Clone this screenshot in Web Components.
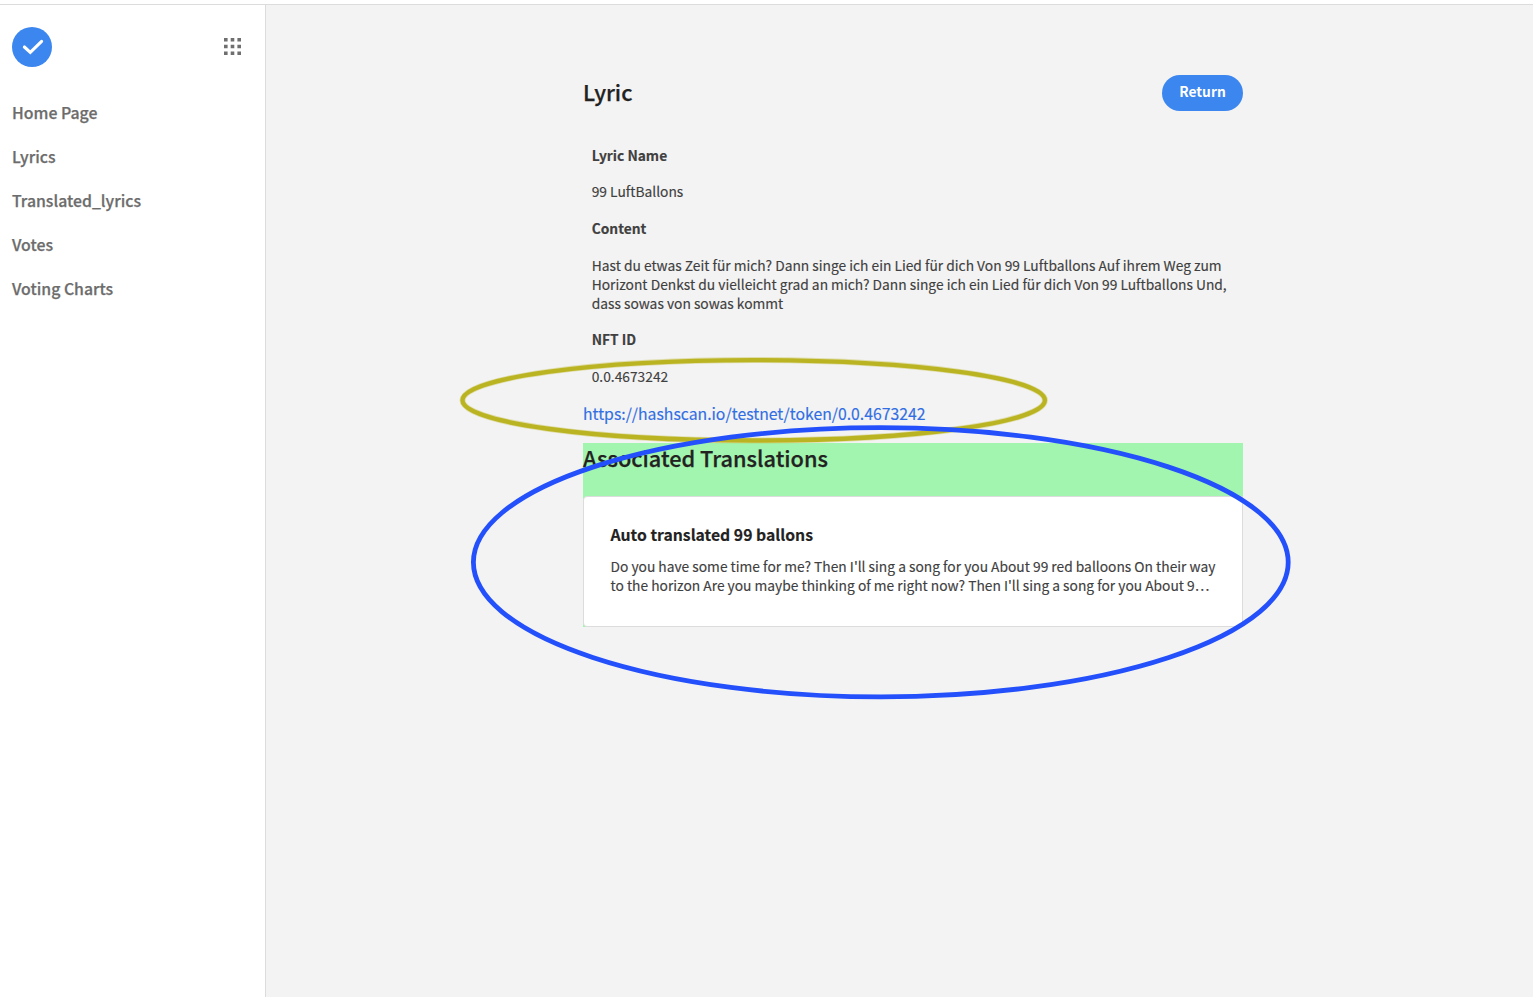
<!DOCTYPE html>
<html lang="en">
<head>
<meta charset="utf-8">
<title>Lyric</title>
<style>
html,body{margin:0;height:100%;overflow:hidden}
body{font-family:"Noto Sans CJK SC","Noto Sans",sans-serif;background:#fff}
</style>
</head>
<body>
<lyric-app></lyric-app>
<script>
const define = (name, html) => customElements.define(name, class extends HTMLElement {
  connectedCallback() {
    if (this.shadowRoot) return;
    const t = document.createElement('template');
    t.innerHTML = html;
    this.attachShadow({ mode: 'open' }).append(t.content.cloneNode(true));
  }
});

define('brand-bar', `
<style>
:host{display:flex;justify-content:space-between;align-items:center;height:40px;padding:0 24px 0 12px}
svg{display:block}
.grid{margin-top:-1px}
</style>
<svg width="40" height="40" viewBox="0 0 40 40"><circle cx="20" cy="20" r="20" fill="#3b86ef"/><path d="M12.4 20 18.3 25.3 29.6 14.4" fill="none" stroke="#fff" stroke-width="3.1" stroke-linecap="round" stroke-linejoin="miter"/></svg>
<svg class="grid" width="17" height="17" viewBox="0 0 17 17" fill="#6f6f6f"><path d="M0 0h3.6v3.6H0zM6.7 0h3.6v3.6H6.7zM13.4 0H17v3.6h-3.6zM0 6.7h3.6v3.6H0zM6.7 6.7h3.6v3.6H6.7zM13.4 6.7H17v3.6h-3.6zM0 13.4h3.6V17H0zM6.7 13.4h3.6V17H6.7zM13.4 13.4H17V17h-3.6z"/></svg>`);

define('nav-item', `
<style>
:host{display:block;height:44px;line-height:44px;padding-left:12px;font-size:15.84px;font-weight:500;color:#6c6c6c;-webkit-text-stroke:.25px #6c6c6c}
</style><slot></slot>`);

define('side-bar', `
<style>
:host{display:block;width:265px;flex:none;border-right:1px solid #dcdcdc;background:#fff;padding-top:22px}
nav{margin-top:24px}
</style>
<brand-bar></brand-bar>
<nav><nav-item>Home Page</nav-item><nav-item>Lyrics</nav-item><nav-item>Translated_lyrics</nav-item><nav-item>Votes</nav-item><nav-item>Voting Charts</nav-item></nav>`);

define('section-title', `
<style>
:host{display:block;font-size:21.76px;line-height:32px;font-weight:500;color:#222;-webkit-text-stroke:.25px #222}
</style><slot></slot>`);

define('pill-button', `
<style>
:host{display:block;box-sizing:border-box;width:81px;height:36px;border-radius:18px;background:#3b86ef;color:#fff;font-size:13.8px;font-weight:700;line-height:32px;text-align:center}
</style><slot></slot>`);

define('data-field', `
<style>
:host{display:block;padding-left:8.7px;font-size:13.79px;line-height:19px;color:#404040;-webkit-text-stroke:.15px #404040}
.label{font-weight:700;margin-bottom:17.4px}
</style><div class="label"><slot name="label"></slot></div><div><slot></slot></div>`);

define('translation-card', `
<style>
:host{display:block;box-sizing:border-box;height:131px;border:1px solid #dcdcdc;border-radius:4px 0 0 4px;background:#fff;padding:26px 26px 0 26.5px;font-size:13.79px;line-height:19px;color:#404040}
.title{font-size:15.77px;line-height:24px;font-weight:700;color:#222;margin-bottom:10px;-webkit-text-stroke:.15px #222}
.body{white-space:nowrap;-webkit-text-stroke:.15px #404040}
</style><div class="title"><slot name="title"></slot></div><div class="body"><slot></slot></div>`);

define('ring-marks', `
<style>
:host{position:absolute;inset:0;pointer-events:none}
svg{display:block}
</style>
<svg width="1533" height="997" fill="none">
<ellipse cx="753.7" cy="400.3" rx="291.2" ry="40.2" stroke="#bbb422" stroke-opacity=".35" stroke-width="6"/>
<ellipse cx="753.7" cy="400.3" rx="291.2" ry="40.2" stroke="#bbb422" stroke-width="4.4"/>
<ellipse cx="880.8" cy="562.3" rx="407.4" ry="134.6" stroke="#2350fb" stroke-width="4.8"/>
</svg>`);

define('lyric-page', `
<style>
:host{display:block;flex:1;background:#f3f3f3}
main{width:660px;margin-left:317px;padding-top:70px}
header{display:flex;justify-content:space-between;align-items:flex-start;height:71px}
header section-title{margin-top:1px}
.fields{display:grid;row-gap:17.8px}
a{display:block;margin-top:16.4px;font-size:15.77px;line-height:24px;color:#316ee3;text-decoration:none;-webkit-text-stroke:.15px #316ee3}
.assoc{margin-top:16.8px;background:#a2f5ae}
.assoc section-title{height:53px;line-height:30px}
</style>
<main>
<header><section-title>Lyric</section-title><pill-button>Return</pill-button></header>
<div class="fields">
<data-field><span slot="label">Lyric Name</span>99 LuftBallons</data-field>
<data-field><span slot="label">Content</span>Hast du etwas Zeit für mich? Dann singe ich ein Lied für dich Von 99 Luftballons Auf ihrem Weg zum<br>Horizont Denkst du vielleicht grad an mich? Dann singe ich ein Lied für dich Von 99 Luftballons Und,<br>dass sowas von sowas kommt</data-field>
<data-field><span slot="label">NFT ID</span>0.0.4673242</data-field>
</div>
<a>https://hashscan.io/testnet/token/0.0.4673242</a>
<div class="assoc">
<section-title>Associated Translations</section-title>
<translation-card><span slot="title">Auto translated 99 ballons</span>Do you have some time for me? Then I'll sing a song for you About 99 red balloons On their way<br>to the horizon Are you maybe thinking of me right now? Then I'll sing a song for you About 9…</translation-card>
</div>
</main>`);

define('lyric-app', `
<style>
:host{position:relative;display:flex;flex-direction:column;height:997px;overflow:hidden}
.top{height:4px;border-bottom:1px solid #dcdcdc;background:#fff;flex:none}
.row{display:flex;flex:1}
</style>
<div class="top"></div>
<div class="row"><side-bar></side-bar><lyric-page></lyric-page></div>
<ring-marks></ring-marks>`);
</script>
</body>
</html>
